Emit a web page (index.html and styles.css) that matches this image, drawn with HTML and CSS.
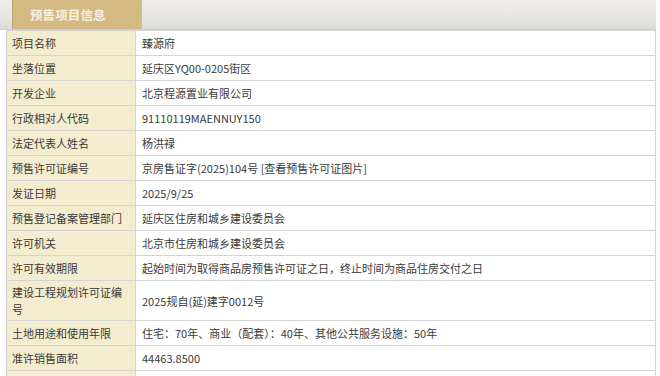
FILE: index.html
```html
<!DOCTYPE html>
<html lang="zh">
<head>
<meta charset="utf-8">
<title>预售项目信息</title>
<link rel="stylesheet" href="styles.css">
</head>
<body>
<div class="panel">
  <div class="tabbar">
    <div class="tab">预售项目信息</div>
  </div>
  <table class="info">
    <tr><th>项目名称</th><td>臻源府</td></tr>
    <tr><th>坐落位置</th><td>延庆区YQ00-0205街区</td></tr>
    <tr><th>开发企业</th><td>北京程源置业有限公司</td></tr>
    <tr><th>行政相对人代码</th><td>91110119MAENNUY150</td></tr>
    <tr><th>法定代表人姓名</th><td>杨洪禄</td></tr>
    <tr><th>预售许可证编号</th><td>京房售证字(2025)104号 <a class="link">[查看预售许可证图片]</a></td></tr>
    <tr><th>发证日期</th><td>2025/9/25</td></tr>
    <tr><th>预售登记备案管理部门</th><td>延庆区住房和城乡建设委员会</td></tr>
    <tr><th>许可机关</th><td>北京市住房和城乡建设委员会</td></tr>
    <tr><th>许可有效期限</th><td>起始时间为取得商品房预售许可证之日，终止时间为商品住房交付之日</td></tr>
    <tr><th>建设工程规划许可证编号</th><td>2025规自(延)建字0012号</td></tr>
    <tr><th>土地用途和使用年限</th><td>住宅：70年、商业（配套）：40年、其他公共服务设施：50年</td></tr>
    <tr><th>准许销售面积</th><td>44463.8500</td></tr>
    <tr><th>&nbsp;</th><td>&nbsp;</td></tr>
  </table>
</div>
</body>
</html>
```
FILE: styles.css
```css
html, body {
  margin: 0;
  padding: 0;
  background: #ffffff;
}
body {
  font-family: "Noto Sans CJK SC", "Noto Sans", sans-serif;
  color: #333333;
  overflow: hidden;
}
.panel {
  width: 656px;
}
.tabbar {
  height: 29px;
  padding-left: 12px;
  background: linear-gradient(#efeeec, #e6e4e1 70%, #dcdad7);
  border-bottom: 1px solid #d2d0cc;
  display: flex;
}
.tab {
  width: 112px;
  height: 29px;
  padding-left: 17px;
  background: #d4b983;
  border-left: 1px solid #bfa470;
  color: #f7f0e0;
  font-size: 12.5px;
  font-weight: bold;
  line-height: 30px;
  letter-spacing: 0.1px;
}
.info {
  margin-left: 6px;
  width: 650px;
  border-collapse: collapse;
  font-size: 11px;
  line-height: 17px;
}
.info th, .info td {
  border: 1px solid #d3d3d3;
  height: 19px;
  padding: 3px 5px 2px;
  vertical-align: middle;
  text-align: left;
  font-weight: normal;
}
.info th {
  width: 118px;
  background: #f4ecce;
  color: #3a3a3a;
}
.info td {
  padding-left: 6px;
  color: #3a3a3a;
}
.link {
  color: #3a3a3a;
  text-decoration: none;
}
```
